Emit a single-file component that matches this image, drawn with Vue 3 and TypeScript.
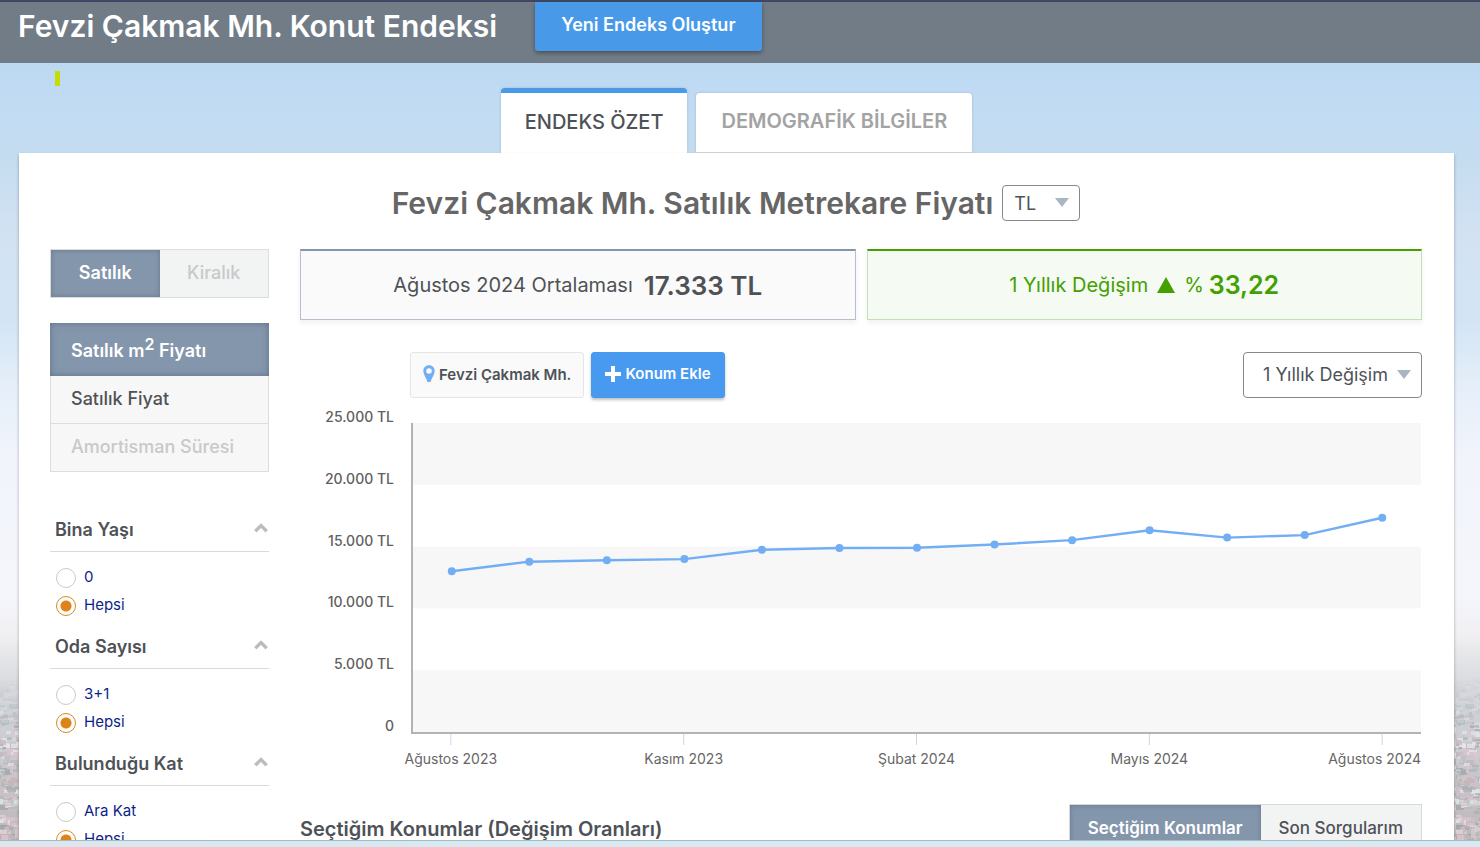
<script setup lang="ts">
import { computed, ref } from 'vue'

interface FilterGroup {
  id: string
  title: string
  options: string[]
  selected: string
}

const currency = ref('TL')
const period = ref('1 Yıllık Değişim')

const filters = ref<FilterGroup[]>([
  { id: 'age', title: 'Bina Yaşı', options: ['0', 'Hepsi'], selected: 'Hepsi' },
  { id: 'rooms', title: 'Oda Sayısı', options: ['3+1', 'Hepsi'], selected: 'Hepsi' },
  { id: 'floor', title: 'Bulunduğu Kat', options: ['Ara Kat', 'Hepsi'], selected: 'Hepsi' },
])

const maxPrice = 25000
const yLabels = ['25.000 TL', '20.000 TL', '15.000 TL', '10.000 TL', '5.000 TL', '0']
const prices = [13011, 13780, 13900, 13990, 14740, 14890, 14910, 15170, 15520, 16320, 15730, 15930, 17333]
const xLabels = [
  { month: 0, text: 'Ağustos 2023' },
  { month: 3, text: 'Kasım 2023' },
  { month: 6, text: 'Şubat 2024' },
  { month: 9, text: 'Mayıs 2024' },
  { month: 12, text: 'Ağustos 2024' },
]

const xPct = (i: number): number => ((i + 0.5) / prices.length) * 100
const points = computed(() => prices.map((p, i) => ({ x: xPct(i), y: (1 - p / maxPrice) * 100 })))
const line = computed(() => points.value.map((p) => `${p.x},${p.y}`).join(' '))

// Rooftops along the horizon, tiled across the width of the backdrop
const palette = ['#e3e6e8', '#c4ced2', '#dcc6cd', '#b4bac2', '#d3c3c9', '#a6adb0', '#e6dfe1', '#c9b5ba', '#9ea6a6']
let seed = 7
const rand = (): number => {
  seed = (seed * 16807) % 2147483647
  return seed / 2147483647
}
const roofs = Array.from({ length: 700 }, () => ({
  x: Math.floor(rand() * 62) - 4,
  y: Math.floor(rand() * 166),
  w: 3 + Math.floor(rand() * 7),
  h: 2 + Math.floor(rand() * 4),
  c: palette[Math.floor(rand() * palette.length)],
  o: 0.4 + rand() * 0.5,
}))
</script>

<template>
  <div class="page">
    <svg class="city" aria-hidden="true">
      <defs>
        <pattern id="roofs" width="56" height="170" patternUnits="userSpaceOnUse">
          <rect v-for="(r, i) in roofs" :key="i" :x="r.x" :y="r.y" :width="r.w" :height="r.h" :fill="r.c" :opacity="r.o" />
        </pattern>
      </defs>
      <rect width="100%" height="100%" fill="url(#roofs)" />
    </svg>

    <header class="topbar">
      <h1>Fevzi Çakmak Mh. Konut Endeksi</h1>
      <button class="create" type="button">Yeni Endeks Oluştur</button>
    </header>

    <main class="content">
      <div class="marker"></div>
      <nav class="tabs">
        <button class="tab active" type="button">ENDEKS ÖZET</button>
        <button class="tab" type="button">DEMOGRAFİK BİLGİLER</button>
      </nav>

      <section class="card">
        <div class="title-row">
          <h2>Fevzi Çakmak Mh. Satılık Metrekare Fiyatı</h2>
          <div class="select small">
            <select v-model="currency" aria-label="Para birimi">
              <option>TL</option>
            </select>
            <svg class="arrow" viewBox="0 0 14 9"><path d="M0 0H14L7 9Z" fill="#a8b5c2" /></svg>
          </div>
        </div>

        <div class="columns">
          <aside class="sidebar">
            <div class="toggle">
              <button class="on" type="button">Satılık</button>
              <button type="button">Kiralık</button>
            </div>

            <ul class="menu">
              <li class="on"><a href="#">Satılık m<sup>2</sup> Fiyatı</a></li>
              <li><a href="#">Satılık Fiyat</a></li>
              <li class="off"><a href="#">Amortisman Süresi</a></li>
            </ul>

            <fieldset v-for="f in filters" :key="f.id" class="filter" :aria-label="f.title">
              <div class="filter-head">
                <h3>{{ f.title }}</h3>
                <svg width="14" height="10" viewBox="0 0 14 10">
                  <path d="M1.3 8.3L7 2.6L12.7 8.3" fill="none" stroke="#bcbcbc" stroke-width="3.4" />
                </svg>
              </div>
              <label v-for="o in f.options" :key="o" class="option">
                <input v-model="f.selected" type="radio" :name="f.id" :value="o" />
                <span>{{ o }}</span>
              </label>
            </fieldset>
          </aside>

          <div class="main">
            <div class="stats">
              <div class="stat">
                <span>Ağustos 2024 Ortalaması</span>
                <strong>17.333 TL</strong>
              </div>
              <div class="stat up">
                <span>1 Yıllık Değişim</span>
                <svg width="18" height="16" viewBox="0 0 18 16"><path d="M9 0L18 16H0Z" fill="#43a000" /></svg>
                <span class="pct">%</span>
                <strong>33,22</strong>
              </div>
            </div>

            <div class="toolbar">
              <div class="chip">
                <svg width="12" height="18" viewBox="0 0 12 18">
                  <path
                    fill-rule="evenodd"
                    d="M6 0.3C2.7 0.3 0.3 2.7 0.3 5.9C0.3 9.6 3.6 13.2 4.5 17H7.5C8.4 13.2 11.7 9.6 11.7 5.9C11.7 2.7 9.3 0.3 6 0.3ZM6 3.2A2.8 2.8 0 1 1 6 8.8A2.8 2.8 0 1 1 6 3.2Z"
                    fill="#72aef3"
                  />
                </svg>
                <span>Fevzi Çakmak Mh.</span>
              </div>
              <button class="add" type="button">
                <svg width="16" height="16" viewBox="0 0 16 16"><path d="M6 0H10V6H16V10H10V16H6V10H0V6H6Z" fill="#fff" /></svg>
                <span>Konum Ekle</span>
              </button>
              <div class="select large">
                <select v-model="period" aria-label="Dönem">
                  <option>1 Yıllık Değişim</option>
                </select>
                <svg class="arrow" viewBox="0 0 14 9"><path d="M0 0H14L7 9Z" fill="#a8b5c2" /></svg>
              </div>
            </div>

            <div class="chart">
              <div class="y-axis">
                <span v-for="l in yLabels" :key="l">{{ l }}</span>
              </div>
              <div class="plot">
                <svg width="100%" height="100%">
                  <rect v-for="b in [0, 40, 80]" :key="b" x="0" :y="b + '%'" width="100%" height="20%" fill="#f7f7f7" />
                  <svg width="100%" height="100%" viewBox="0 0 100 100" preserveAspectRatio="none">
                    <polyline :points="line" fill="none" stroke="#72aef3" stroke-width="2.4" stroke-linejoin="round" vector-effect="non-scaling-stroke" />
                  </svg>
                  <circle v-for="(p, i) in points" :key="i" :cx="p.x + '%'" :cy="p.y + '%'" r="4" fill="#72aef3" />
                </svg>
              </div>
              <div class="x-axis">
                <svg class="ticks" width="100%" height="11">
                  <line v-for="l in xLabels" :key="l.text" :x1="xPct(l.month) + '%'" :x2="xPct(l.month) + '%'" y1="0" y2="11" stroke="#ccd6eb" />
                </svg>
                <div class="months">
                  <span v-for="l in xLabels" :key="l.text" :class="'m' + l.month">{{ l.text }}</span>
                </div>
              </div>
            </div>

            <div class="list-head">
              <h3>Seçtiğim Konumlar (Değişim Oranları)</h3>
              <div class="list-tabs">
                <button class="on" type="button">Seçtiğim Konumlar</button>
                <button type="button">Son Sorgularım</button>
              </div>
            </div>
          </div>
        </div>
      </section>
    </main>

    <footer class="bottom"></footer>
  </div>
</template>

<style>
body {
  margin: 0;
  overflow: hidden;
}
</style>

<style scoped>
* {
  box-sizing: border-box;
}
.page {
  position: relative;
  z-index: 0;
  display: flex;
  flex-direction: column;
  height: 100vh;
  overflow: hidden;
  font-family: Inter, 'Liberation Sans', sans-serif;
  color: #4e5257;
  background: linear-gradient(
    #bad7f0 0%,
    #bdd9f2 8%,
    #c2dcf3 14%,
    #c4dcf0 18%,
    #d2e2f2 28%,
    #d3e5f5 38%,
    #e6eff9 46%,
    #f1f4fb 54%,
    #f5f6fc 70%,
    #f0f0f3 75%,
    #dfe0e3 79%,
    #ccd2d8 84%,
    #cbc5cb 92%,
    #b9b5b6 100%
  );
}
.city {
  position: absolute;
  z-index: -1;
  left: 0;
  bottom: 0;
  width: 100%;
  height: 170px;
  mask-image: linear-gradient(transparent, #000 60px);
}
h1,
h2,
h3 {
  margin: 0;
  font-weight: 600;
}
button,
select {
  font-family: inherit;
  cursor: pointer;
}
.topbar {
  display: flex;
  align-items: flex-start;
  gap: 38px;
  flex: none;
  height: 63px;
  padding-left: 18px;
  border-top: 2px solid #3f4763;
  background: #717c87;
}
h1 {
  font-size: 30px;
  line-height: 48px;
  color: #fff;
}
.create {
  height: 49px;
  padding: 0 26px 4px;
  border: 0;
  border-radius: 0 0 3px 3px;
  background: #489ae9;
  box-shadow: 0 2px 4px rgba(0, 0, 0, 0.35);
  color: #fff;
  font-size: 18px;
  font-weight: 600;
}
.content {
  flex: 1;
  min-height: 0;
  overflow: hidden;
  padding: 8px 26px 0 19px;
}
.marker {
  width: 5px;
  height: 15px;
  margin-left: 36px;
  background: #c3de00;
}
.tabs {
  display: flex;
  justify-content: center;
  align-items: flex-end;
  gap: 9px;
  margin-top: 2px;
}
.tab {
  height: 60px;
  padding: 0 25px 3px;
  border: 0;
  border-bottom: 1px solid #d4d4d4;
  border-radius: 4px 4px 0 0;
  background: #fff;
  box-shadow: 0 0 3px rgba(0, 0, 0, 0.15);
  color: #a3a3a3;
  font-size: 20px;
  font-weight: 600;
}
.tab.active {
  height: 65px;
  padding: 0 24px 2px;
  border-top: 5px solid #489ae9;
  border-bottom: 0;
  color: #4e5257;
  font-weight: 500;
}
.card {
  position: relative;
  padding: 32px 32px 40px 31px;
  background: #fff;
  box-shadow: 0 2px 3px rgba(0, 0, 0, 0.3);
}
.title-row {
  display: flex;
  justify-content: center;
  align-items: center;
  gap: 9px;
}
h2 {
  font-size: 30px;
  line-height: 36px;
  color: #666;
}
.select {
  position: relative;
}
.select select {
  appearance: none;
  display: block;
  width: 100%;
  height: 100%;
  margin: 0;
  border: 1px solid #85888c;
  border-radius: 4px;
  background: #fff;
  color: #4e5257;
  font-size: 18px;
}
.small {
  width: 78px;
  height: 36px;
}
.small select {
  padding: 0 0 0 11px;
}
.large {
  width: 179px;
  height: 46px;
  margin-left: auto;
}
.large select {
  padding: 0 0 2px 19px;
}
.arrow {
  position: absolute;
  top: 50%;
  right: 11px;
  width: 14px;
  height: 9px;
  margin-top: -5px;
  pointer-events: none;
}
.columns {
  display: grid;
  grid-template-columns: 219px minmax(0, 1fr);
  gap: 31px;
  margin-top: 28px;
}
.toggle {
  display: grid;
  grid-template-columns: 1fr 1fr;
  height: 49px;
  border: 1px solid #dcdddd;
}
.toggle button {
  padding: 0 0 2px;
  border: 0;
  background: #f2f4f4;
  color: #c7c9ca;
  font-size: 18px;
  font-weight: 500;
}
.toggle .on,
.list-tabs .on {
  background: #8496ac;
  box-shadow: inset 0 0 5px rgba(60, 75, 95, 0.4);
  color: #fff;
  font-weight: 600;
}
.menu {
  margin: 25px 0 41px;
  padding: 0;
  list-style: none;
  border: 1px solid #dcdddd;
  border-top: 0;
  background: #f7f7f7;
}
.menu li {
  height: 47px;
  padding-left: 20px;
  font-size: 18px;
  font-weight: 500;
  line-height: 45px;
}
.menu a {
  color: inherit;
  text-decoration: none;
}
.menu .on {
  height: 53px;
  margin: 0 -1px;
  padding-left: 21px;
  background: #8496ac;
  box-shadow: inset 0 0 6px rgba(60, 75, 95, 0.5);
  color: #fff;
  font-weight: 600;
  line-height: 55px;
}
.menu sup {
  font-size: 16px;
  line-height: 0;
}
.menu .off {
  height: 48px;
  border-top: 1px solid #dcdddd;
  color: #c7c9ca;
}
.filter {
  min-width: 0;
  margin: 0 0 10px;
  padding: 0;
  border: 0;
}
.filter-head {
  display: flex;
  justify-content: space-between;
  align-items: center;
  height: 39px;
  margin-bottom: 12px;
  padding: 0 1px 5px 5px;
  border-bottom: 1px solid #d9dadb;
}
.filter h3 {
  font-size: 18px;
}
.filter-head svg {
  margin-bottom: 3px;
}
.option {
  display: flex;
  align-items: center;
  gap: 8px;
  height: 28px;
  padding-left: 6px;
  color: #0d1f87;
  font-size: 15px;
}
.option span {
  line-height: 20px;
  padding-bottom: 2px;
}
.option input {
  appearance: none;
  width: 20px;
  height: 20px;
  margin: 0;
  border: 1px solid #c9cacb;
  border-radius: 50%;
  background: #fff;
}
.option input:checked {
  border-color: #dd851f;
  background: radial-gradient(circle, #dd8317 5px, #fff 6px);
}
.stats {
  display: grid;
  grid-template-columns: 1fr 1fr;
  gap: 11px;
}
.stat {
  display: flex;
  justify-content: center;
  align-items: center;
  gap: 11px;
  height: 71px;
  border: 1px solid #b5bfcd;
  border-top: 2px solid #8496ac;
  background: #fafafa;
  box-shadow: 0 3px 5px rgba(0, 0, 0, 0.06);
  font-size: 20px;
}
.stat strong {
  font-size: 26px;
  font-weight: 600;
}
.stat.up {
  gap: 9px;
  border-color: #43a000 #c5e0b4 #c5e0b4;
  background: #f5faf3;
  color: #43a000;
}
.up .pct {
  margin-right: -4px;
}
.up strong {
  font-size: 25px;
}
.toolbar {
  display: flex;
  gap: 7px;
  margin-top: 32px;
  padding-left: 110px;
}
.chip,
.add {
  display: flex;
  align-items: center;
  gap: 4px;
  height: 46px;
  padding: 0 12px 2px;
  border: 1px solid #e4e5e6;
  border-radius: 3px;
  background: #fafafa;
  font-size: 15px;
  font-weight: 600;
  white-space: nowrap;
}
.add {
  padding: 0 13px 3px;
  border-color: #489ae9;
  background: #489af1;
  box-shadow: 0 2px 3px rgba(0, 0, 0, 0.25);
  color: #fff;
}
.chart {
  display: grid;
  grid-template-columns: 94px minmax(0, 1fr);
  column-gap: 17px;
  margin: 9px 1px 0 0;
}
.y-axis {
  display: flex;
  flex-direction: column;
  justify-content: space-between;
  height: 329px;
  font-size: 14px;
  font-weight: 500;
  line-height: 20px;
  text-align: right;
  color: #606060;
}
.plot {
  height: 311px;
  margin-top: 16px;
  border-left: 2px solid #b3b3b3;
  border-bottom: 2px solid #b3b3b3;
}
.plot > svg {
  display: block;
}
.x-axis {
  grid-column: 2;
  padding-left: 1px;
  margin-top: -2px;
  font-size: 14px;
  line-height: 20px;
  color: #666;
}
.ticks {
  display: block;
}
.months {
  display: grid;
  grid-template-columns: repeat(13, minmax(0, 1fr));
  padding-top: 4px;
}
.months span {
  justify-self: center;
  grid-row: 1;
  white-space: nowrap;
}
.months .m0 {
  grid-column: 1;
}
.months .m3 {
  grid-column: 4;
}
.months .m6 {
  grid-column: 7;
}
.months .m9 {
  grid-column: 10;
}
.months .m12 {
  grid-column: 13;
  justify-self: end;
}
.list-head {
  display: flex;
  justify-content: space-between;
  align-items: center;
  margin-top: 35px;
}
.list-head h3 {
  font-size: 20px;
}
.list-tabs {
  display: flex;
  height: 49px;
  border: 1px solid #d6d8d9;
}
.list-tabs button {
  padding: 0 18px 2px;
  border: 0;
  background: #f2f4f4;
  color: #4e5257;
  font-size: 17px;
  font-weight: 500;
}
.list-tabs .on {
  color: #fff;
  font-weight: 600;
}
.bottom {
  position: relative;
  flex: none;
  height: 7px;
  border-top: 1px solid #a9b8be;
  background: linear-gradient(90deg, #dbe6ed, #d5eaf1 30%, #d6eaf2);
}
</style>
